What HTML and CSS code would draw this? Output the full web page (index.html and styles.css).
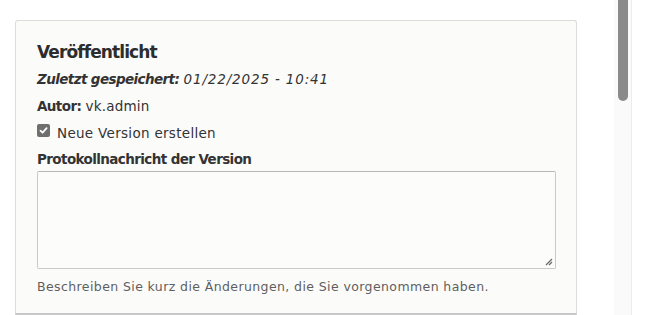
FILE: index.html
```html
<!DOCTYPE html>
<html lang="de">
<head>
<meta charset="utf-8">
<link rel="stylesheet" href="styles.css">
</head>
<body>
<div class="page">
  <main class="main">
    <section class="panel">
      <h2 class="title">Veröffentlicht</h2>
      <div class="meta"><em><strong>Zuletzt gespeichert:</strong> <span class="date">01/22/2025 - 10:41</span></em></div>
      <div class="meta author"><strong>Autor:</strong> <span class="val">vk.admin</span></div>
      <label class="check">
        <span class="box"><svg width="9" height="9" viewBox="0 0 9 9"><path d="M1.5 4.6 L3.6 6.7 L7.6 2.2" fill="none" stroke="#fff" stroke-width="1.8" stroke-linecap="round" stroke-linejoin="round"/></svg></span>
        <span class="check-text">Neue Version erstellen</span>
      </label>
      <div class="field-label">Protokollnachricht der Version</div>
      <div class="textarea">
        <svg class="grip" width="9" height="9" viewBox="0 0 9 9"><path d="M8 2 L2 8 M8 5 L5 8" stroke="#666" stroke-width="1.2" fill="none"/></svg>
      </div>
      <div class="desc">Beschreiben Sie kurz die Änderungen, die Sie vorgenommen haben.</div>
    </section>
  </main>
  <div class="scrollbar"><div class="thumb"></div></div>
  <div class="rest"></div>
</div>
</body>
</html>
```
FILE: styles.css
```css
html, body {
  margin: 0;
  padding: 0;
  background: #fff;
}
body {
  font-family: "DejaVu Sans", "Liberation Sans", sans-serif;
  color: #333;
  width: 650px;
  height: 315px;
  overflow: hidden;
}
.page {
  display: flex;
  height: 315px;
}
.main {
  width: 614px;
  padding: 20px 0 0 15px;
  box-sizing: border-box;
}
.panel {
  width: 562px;
  box-sizing: border-box;
  background: #fbfbfa;
  border: 1px solid #dcdcdc;
  border-bottom: 2px solid #c8c8c8;
  border-radius: 3px 3px 0 0;
  padding: 20px 21px 18px 21px;
}
.title {
  margin: 0;
  font-size: 17px;
  font-weight: bold;
  line-height: 22px;
  letter-spacing: -0.9px;
  color: #2d2d2d;
}
.meta {
  font-size: 13.5px;
  line-height: 18px;
  margin-top: 7px;
}
.meta strong {
  letter-spacing: -0.6px;
}
.meta em { font-style: italic; }
.date {
  letter-spacing: 0.85px;
}
.author { margin-top: 9px; }
.val { letter-spacing: 0.2px; }
.check {
  display: flex;
  align-items: flex-start;
  font-size: 13.5px;
  line-height: 18px;
  margin-top: 9px;
}
.check-text { letter-spacing: 0.3px; }
.box {
  width: 13px;
  height: 13px;
  box-sizing: border-box;
  background: #6f6f6f;
  border-radius: 2px;
  display: flex;
  align-items: center;
  justify-content: center;
  margin: 0 7px 0 0;
}
.field-label {
  font-size: 13.5px;
  font-weight: bold;
  line-height: 18px;
  letter-spacing: -0.6px;
  margin-top: 8px;
}
.textarea {
  position: relative;
  width: 519px;
  height: 98px;
  box-sizing: border-box;
  border: 1px solid #c9c9c9;
  border-top-color: #b8b8b8;
  border-radius: 2px;
  background: #fcfcfb;
  margin-top: 3px;
}
.grip {
  position: absolute;
  right: 2px;
  bottom: 2px;
}
.desc {
  font-size: 12.5px;
  line-height: 16px;
  letter-spacing: 0.4px;
  color: #5f5f5f;
  margin-top: 10px;
}
.scrollbar {
  width: 17px;
  height: 315px;
  background: #fafafa;
  border-right: 1px solid #ececec;
  display: flex;
  justify-content: center;
}
.thumb {
  width: 10px;
  height: 101px;
  background: #8a8a8a;
  border-radius: 0 0 5px 5px;
}
.rest {
  flex: 1;
  background: #fff;
}
```
